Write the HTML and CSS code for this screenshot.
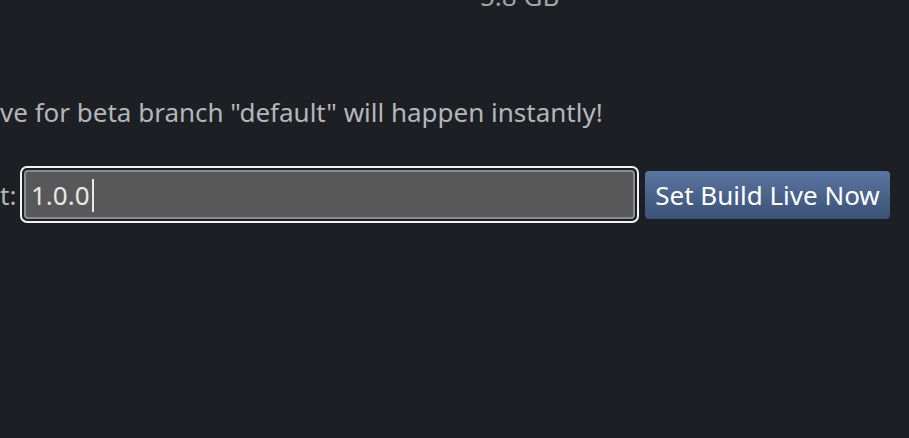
FILE: index.html
```html
<!DOCTYPE html>
<html lang="en">
<head>
  <meta charset="UTF-8">
  <title>Set Build Live</title>
  <link rel="stylesheet" href="styles.css">
</head>
<body>
  <div class="page">
    <div class="size">5.8 GB</div>
    <p class="notice">ve for beta branch "default" will happen instantly!</p>
    <div class="row">
      <label class="label" for="desc">t:</label>
      <div class="field">
        <input id="desc" type="text" value="1.0.0"><span class="caret"></span>
      </div>
      <button class="live">Set Build Live Now</button>
    </div>
  </div>
</body>
</html>
```
FILE: styles.css
```css
* {
  box-sizing: border-box;
}
body {
  background: #1c1f24;
  font-family: 'Noto Sans', sans-serif;
  margin: 0;
  height: 100vh;
  overflow: hidden;
}
.page {
  display: flex;
  flex-direction: column;
}
.size {
  color: #a3a5a8;
  font-size: 26px;
  line-height: 30px;
  margin-top: -19px;
  padding-left: 480px;
}
.notice {
  color: #b4b6b8;
  font-size: 26px;
  line-height: 32px;
  margin: 85px 0 0 0;
}
.row {
  display: flex;
  align-items: center;
  margin-top: 38px;
}
.label {
  flex-shrink: 0;
  color: #b4b6b8;
  font-size: 26px;
  width: 20px;
}
.field {
  position: relative;
  flex-shrink: 0;
  width: 619px;
  height: 57px;
  border: 2px solid #f2f2f2;
  border-radius: 7px;
  padding: 2px;
  background: #1c1f24;
}
.field input {
  width: 100%;
  height: 100%;
  background: #585858;
  border: 2px solid #8c8c8c;
  border-radius: 4px;
  color: #e8e8e8;
  font-family: 'Noto Sans', sans-serif;
  font-size: 26px;
  padding: 0 5px;
  outline: none;
}
.caret {
  position: absolute;
  left: 70px;
  top: 11px;
  width: 2px;
  height: 33px;
  background: #e8e8e8;
}
.live {
  flex-shrink: 0;
  margin-left: 6px;
  width: 245px;
  height: 48px;
  border: none;
  border-radius: 4px;
  background: linear-gradient(#5b76a1, #3a5176);
  color: #ffffff;
  font-family: 'Noto Sans', sans-serif;
  font-size: 26px;
  padding: 0;
  cursor: pointer;
}
```
